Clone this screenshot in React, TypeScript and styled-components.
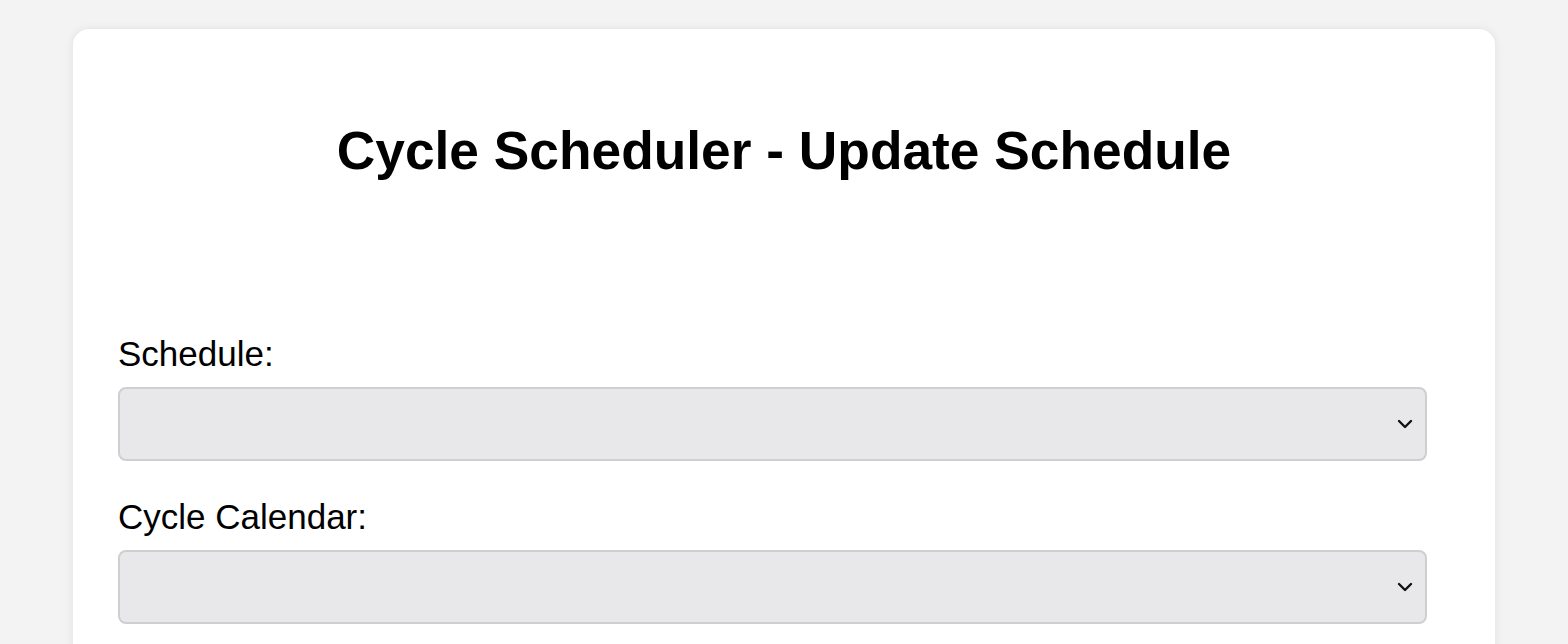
import * as React from 'react';
import styled, { createGlobalStyle } from 'styled-components';

const GlobalStyle = createGlobalStyle`
	html, body {
		margin: 0;
		padding: 0;
		background: #f3f3f3;
		font-family: "Liberation Sans", Arial, Helvetica, sans-serif;
		color: #000000;
	}
`

const Page = styled.main`
	padding-top: 29px;
	min-height: 100vh;
	box-sizing: border-box;
`

const Card = styled.section`
	width: 1422px;
	margin: 0 auto;
	min-height: 700px;
	box-sizing: border-box;
	padding: 91px 45px 40px 45px;
	background: #ffffff;
	border-radius: 16px;
	box-shadow: 0 0 10px rgba(0, 0, 0, 0.08);
`

const Title = styled.h1`
	margin: 0 0 153px 0;
	text-align: center;
	font-size: 53.3px;
	font-weight: 700;
	line-height: 61px;
`

const Form = styled.form`
	display: flex;
	flex-direction: column;
	gap: 36px;
	padding-right: 23px;
`

const Field = styled.div`
	display: flex;
	flex-direction: column;
	gap: 13px;
`

const Label = styled.label`
	font-size: 35px;
	line-height: 40px;
`

const SelectWrap = styled.div`
	position: relative;
`

const Select = styled.select`
	appearance: none;
	-webkit-appearance: none;
	width: 100%;
	height: 74px;
	box-sizing: border-box;
	background: #e8e8eb;
	border: 2px solid #cfcfd1;
	border-radius: 8px;
	font-family: inherit;
	font-size: 30px;
	padding: 0 50px 0 16px;
	outline: none;
`

const Chevron = styled.svg`
	position: absolute;
	right: 14px;
	top: 50%;
	width: 16px;
	height: 10px;
	transform: translateY(-50%);
	pointer-events: none;
`

function Dropdown({ id }: { id: string }) {
	return (
		<SelectWrap>
			<Select id={id} defaultValue="">
				<option value=""></option>
			</Select>
			<Chevron viewBox="0 0 16 10" fill="none">
				<path d="M2 2 L8 8 L14 2" stroke="#111" strokeWidth="2.4" strokeLinecap="round" strokeLinejoin="round" />
			</Chevron>
		</SelectWrap>
	)
}

export default function App() {
	return (
		<>
			<GlobalStyle />
			<Page>
				<Card>
					<Title>Cycle Scheduler - Update Schedule</Title>
					<Form>
						<Field>
							<Label htmlFor="schedule">Schedule:</Label>
							<Dropdown id="schedule" />
						</Field>
						<Field>
							<Label htmlFor="calendar">Cycle Calendar:</Label>
							<Dropdown id="calendar" />
						</Field>
					</Form>
				</Card>
			</Page>
		</>
	)
}
